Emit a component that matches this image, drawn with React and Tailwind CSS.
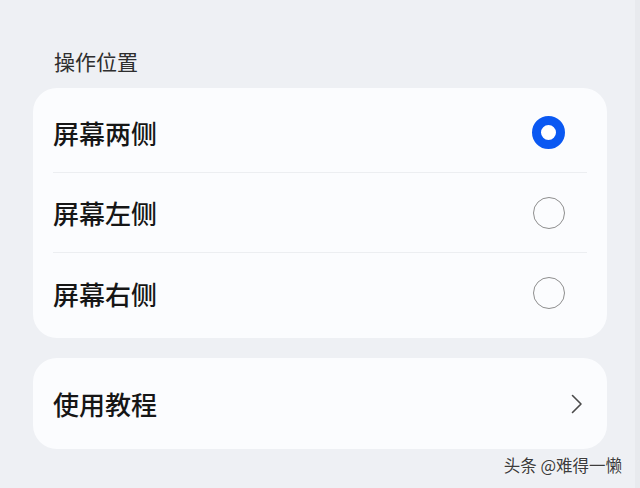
import React, { useState } from 'react';

const font = { fontFamily: '"Noto Sans CJK SC", "Noto Sans", sans-serif' };

const options = ['屏幕两侧', '屏幕左侧', '屏幕右侧'];

const Radio = ({ checked }) =>
  checked ? (
    <span className="block w-[33px] h-[33px] rounded-full border-[9.5px] border-[#0a58f2] bg-white" />
  ) : (
    <span className="block w-[32px] h-[32px] rounded-full border-[1.5px] border-[#8e8e8e]" />
  );

export default function App() {
  const [selected, setSelected] = useState(0);

  return (
    <div
      className="relative w-[640px] h-[488px] overflow-hidden bg-[#eef0f4] border-r-[5px] border-[#e8eaee]"
      style={font}
    >
      <div className="pl-[33px] pr-[28px] pt-[47px]">
        {/* section title */}
        <div className="pl-[21px] text-[21px] leading-[28px] text-[#2e2e2e]">操作位置</div>

        {/* options card */}
        <div className="mt-[13px] bg-[#fbfcfe] rounded-[24px] px-[20px] py-[5px]">
          {options.map((label, i) => (
            <button
              key={label}
              onClick={() => setSelected(i)}
              className={`w-full h-[80px] flex items-center justify-between pr-[22px] ${
                i < options.length - 1 ? 'border-b border-[#eceef1]' : ''
              }`}
            >
              <span className="text-[26px] font-medium text-[#161616]">{label}</span>
              <Radio checked={selected === i} />
            </button>
          ))}
        </div>

        {/* tutorial card */}
        <div className="mt-[20px] h-[91px] bg-[#fbfcfe] rounded-[24px] pl-[20px] pr-[24px] flex items-center justify-between">
          <span className="text-[26px] font-medium text-[#161616]">使用教程</span>
          <svg width="12" height="20" viewBox="0 0 12 20" fill="none">
            <path d="M1.5 1.5 L10 10 L1.5 18.5" stroke="#4a4a4a" strokeWidth="1.6" strokeLinecap="round" strokeLinejoin="round" />
          </svg>
        </div>
      </div>

      {/* watermark */}
      <div
        className="absolute right-[13px] bottom-[12px] text-[16.5px] leading-[22px] text-[#3c3c3c]"
        style={{ textShadow: '0 0 2px #fff' }}
      >
        头条 @难得一懒
      </div>
    </div>
  );
}
